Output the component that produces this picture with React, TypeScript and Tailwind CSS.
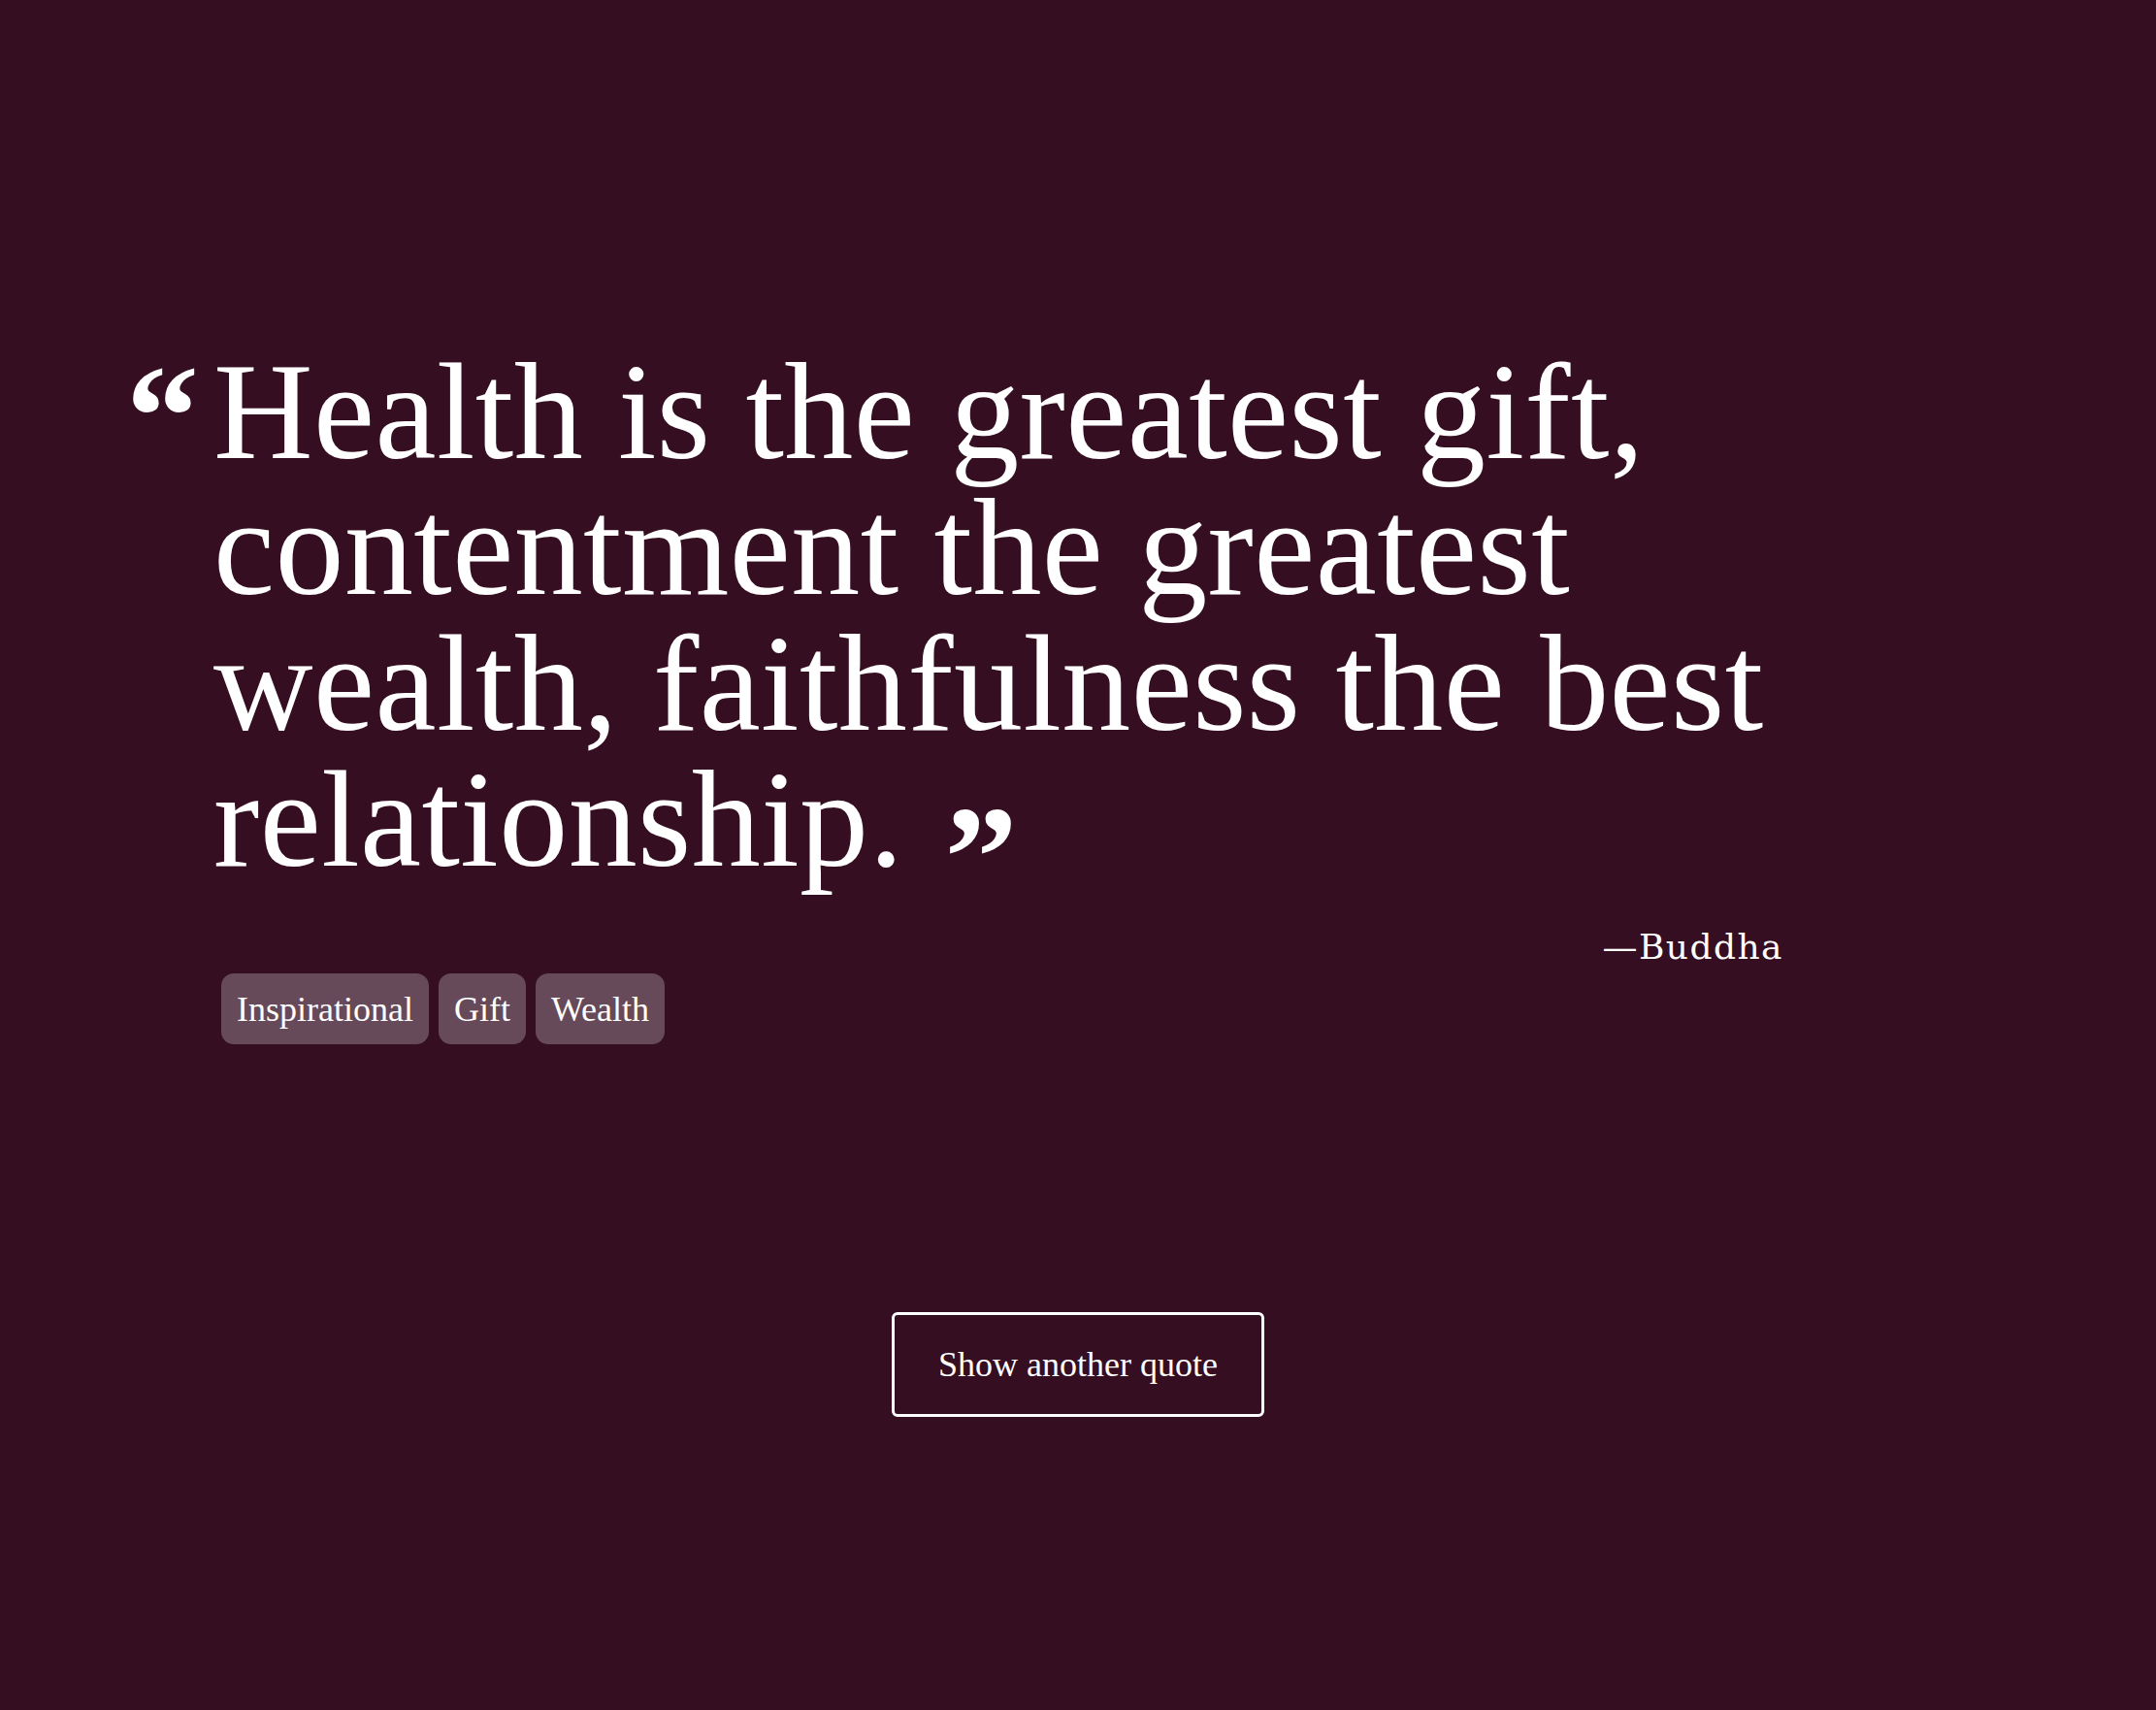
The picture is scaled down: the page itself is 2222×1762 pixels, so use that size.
import React from "react";

const tags = ["Inspirational", "Gift", "Wealth"];

export default function App() {
  return (
    <div className="min-h-screen bg-[#350e22] text-white">
      <div className="w-[1838px] pl-[130px] pt-[354px]">
        <div className="flex items-start">
          <span className="mt-[0px] w-[90px] shrink-0 font-['Liberation_Serif',serif] text-[150px] font-bold leading-none">
            “
          </span>
          <blockquote className="font-['Liberation_Serif',serif] text-[142px] leading-[140px] tracking-[0.003em]">
            Health is the greatest gift, contentment the greatest wealth,
            faithfulness the best relationship.{" "}
            <span className="ml-[6px] align-[-42px] font-['Liberation_Serif',serif] text-[150px] font-bold leading-[0px]">
              ”
            </span>
          </blockquote>
        </div>
        <p className="mt-[44px] text-right font-['DejaVu_Serif',serif] text-[36px] leading-none tracking-[0.04em]">
          —Buddha
        </p>
        <div className="mt-[9px] flex gap-[10px] pl-[98px]">
          {tags.map((t) => (
            <span
              key={t}
              className="flex h-[73px] items-center rounded-[13px] bg-white/25 px-[16px] font-['Liberation_Serif',serif] text-[36px]"
            >
              {t}
            </span>
          ))}
        </div>
      </div>
      <div className="mt-[276px] flex justify-center">
        <button className="flex h-[108px] w-[384px] items-center justify-center rounded-[6px] border-[3px] border-white font-['Liberation_Serif',serif] text-[36px] text-white">
          Show another quote
        </button>
      </div>
    </div>
  );
}
